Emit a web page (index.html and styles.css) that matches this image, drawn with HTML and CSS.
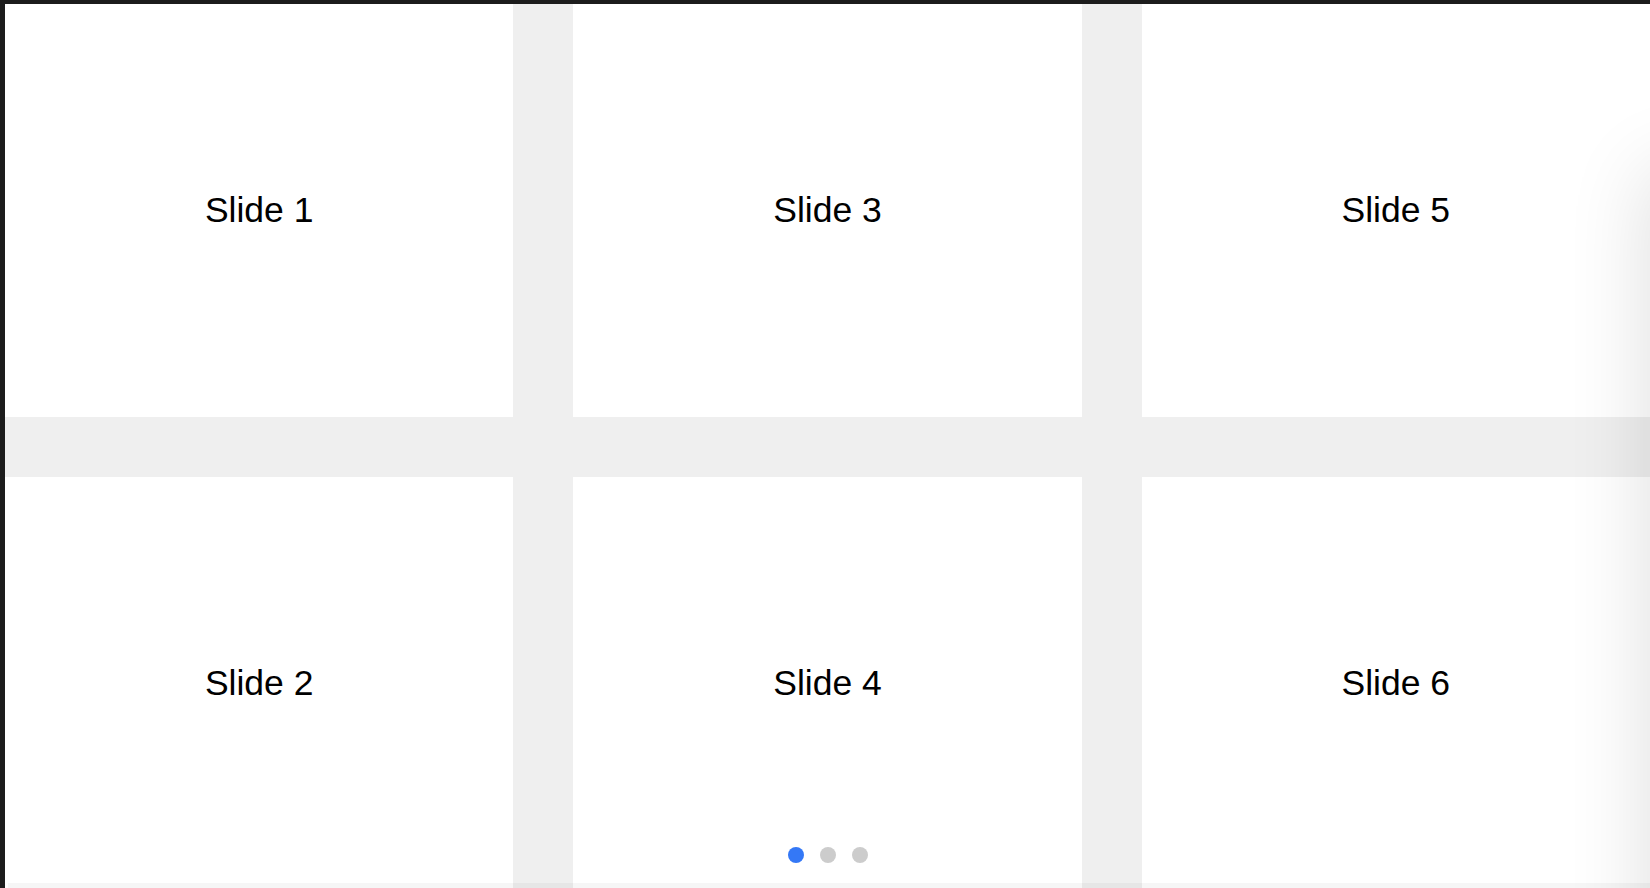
FILE: index.html
```html
<!DOCTYPE html>
<html>
<head>
<meta charset="utf-8">
<link rel="stylesheet" href="styles.css">
</head>
<body>
<div class="frame">
  <div class="swiper">
    <div class="grid">
      <div class="slide">Slide 1</div>
      <div class="slide">Slide 3</div>
      <div class="slide">Slide 5</div>
      <div class="slide">Slide 2</div>
      <div class="slide">Slide 4</div>
      <div class="slide">Slide 6</div>
    </div>
    <div class="dots">
      <span class="dot active"></span>
      <span class="dot"></span>
      <span class="dot"></span>
    </div>
    <div class="edge-shadow"></div>
    <div class="bottom-strip"></div>
  </div>
</div>
</body>
</html>
```
FILE: styles.css
```css
html, body {
  margin: 0;
  padding: 0;
  width: 1650px;
  height: 888px;
  overflow: hidden;
  background: #1c1c1c;
}
.frame {
  padding: 4px 0 0 5px;
  height: 888px;
  box-sizing: border-box;
}
.swiper {
  position: relative;
  width: 1645px;
  height: 884px;
  background: #efefef;
  overflow: hidden;
}
.grid {
  display: grid;
  grid-template-columns: 508.33px 508.33px 508.34px;
  grid-template-rows: 413px 413px;
  column-gap: 60px;
  row-gap: 60px;
  background: #efefef;
  height: 886px;
}
.slide {
  background: #fff;
  display: flex;
  align-items: center;
  justify-content: center;
  font-family: "Liberation Sans", Arial, sans-serif;
  font-size: 35.5px;
  color: #000;
}
.dots {
  position: absolute;
  left: 0;
  right: 0;
  bottom: 25px;
  display: flex;
  justify-content: center;
  gap: 16px;
}
.dot {
  width: 16px;
  height: 16px;
  border-radius: 50%;
  background: #cccccc;
}
.dot.active {
  background: #3478f6;
}
.edge-shadow {
  position: absolute;
  top: 170px;
  right: -120px;
  width: 120px;
  height: 900px;
  box-shadow: 0 0 80px 5px rgba(0, 0, 0, 0.12);
  background: #fff;
}
.bottom-strip {
  position: absolute;
  left: 3px;
  right: 0;
  bottom: 0;
  height: 5px;
  background: rgba(0, 0, 0, 0.035);
}
```
